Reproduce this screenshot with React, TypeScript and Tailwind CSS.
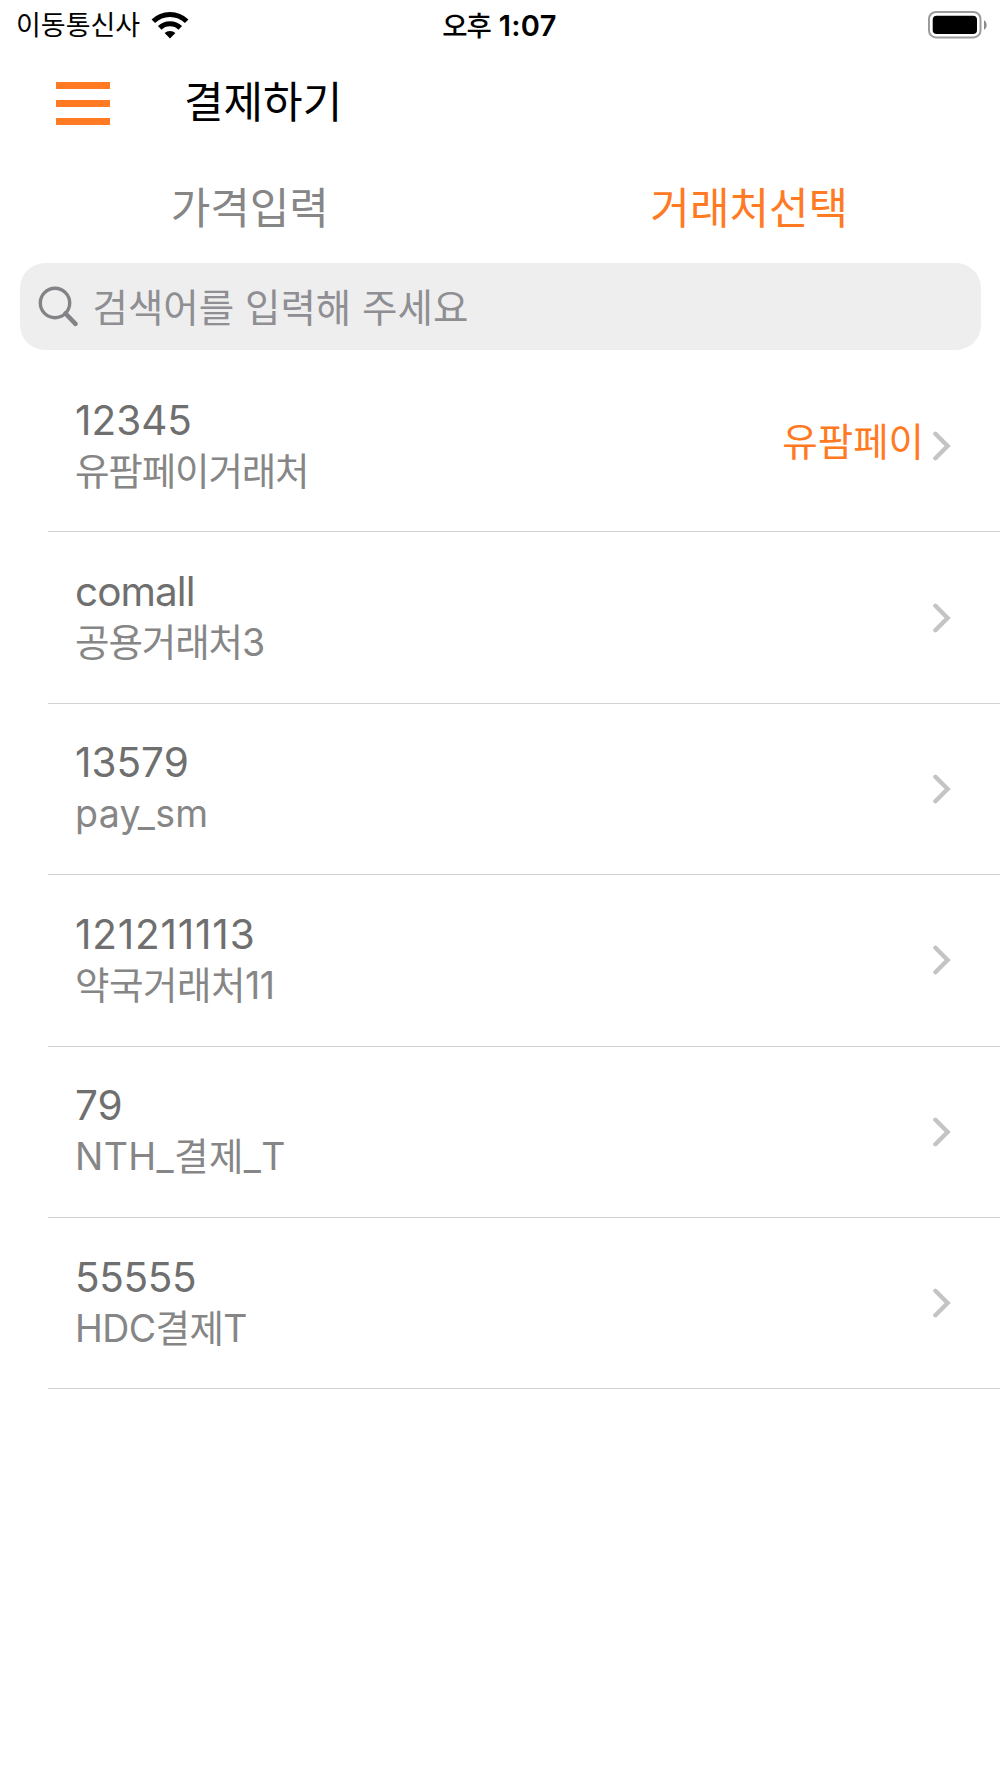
const merchants = [
  { code: "12345", name: "유팜페이거래처", tag: "유팜페이", codeStyle: "tracking-normal", nameStyle: "tracking-[-1.15px]" },
  { code: "comall", name: "공용거래처3", codeStyle: "tracking-[-0.95px]", nameStyle: "tracking-[-1.1px]" },
  { code: "13579", name: "pay_sm", codeStyle: "tracking-normal", nameStyle: "tracking-[0.3px]" },
  { code: "121211113", name: "약국거래처11", codeStyle: "tracking-[0.8px]", nameStyle: "tracking-[-0.5px]" },
  { code: "79", name: "NTH_결제_T", codeStyle: "tracking-normal", nameStyle: "tracking-[0.4px]" },
  { code: "55555", name: "HDC결제T", codeStyle: "tracking-[-0.4px]", nameStyle: "tracking-[-0.6px]" },
];

function WifiIcon() {
  return (
    <svg className="ml-[11px] h-[28px] w-[38px]" viewBox="0 0 38 28" fill="none" stroke="#000">
      <path d="M2.3 10.3A23.8 23.8 0 0 1 35.7 10.3" strokeWidth="5" />
      <path d="M8.7 16.9A14.7 14.7 0 0 1 29.3 16.9" strokeWidth="5" />
      <path d="M19 27.5L13.6 22.1A7.7 7.7 0 0 1 24.4 22.1Z" fill="#000" stroke="none" />
    </svg>
  );
}

function BatteryIcon() {
  return (
    <svg className="h-[28px] w-[60px]" viewBox="0 0 60 28">
      <rect x="1" y="1" width="51.5" height="25.4" rx="7" fill="none" stroke="#9b9b9b" strokeWidth="2" />
      <rect x="4.7" y="4.7" width="44.3" height="18.3" rx="4" fill="#000" />
      <path d="M56 9.2C59.5 11 59.5 17 56 18.8Z" fill="#8a8a8a" />
    </svg>
  );
}

function StatusBar() {
  return (
    <div className="grid h-12 grid-cols-3 items-center text-black">
      <div className="flex items-center pl-[16px]">
        <span className="pt-[2px] text-[27px] leading-[48px]">이동통신사</span>
        <WifiIcon />
      </div>
      <div className="flex items-center justify-center gap-[8px] pt-[2px] pr-[1px] leading-[48px]">
        <span className="text-[27.5px] font-medium tracking-[-0.04em]">오후</span>
        <span className="text-[29px] font-semibold tracking-[0.01em]">1:07</span>
      </div>
      <div className="flex justify-end pr-[12px]">
        <BatteryIcon />
      </div>
    </div>
  );
}

function Header() {
  return (
    <header className="flex h-[108px] items-center pl-[56px]">
      <button className="mt-[2px] flex w-[54px] flex-col gap-[11px]" aria-label="menu">
        <span className="h-[7px] w-full bg-[#ff7a22]" />
        <span className="h-[7px] w-full bg-[#ff7a22]" />
        <span className="h-[7px] w-full bg-[#ff7a22]" />
      </button>
      <h1 className="ml-[74px] text-[43px] leading-[64px] text-black">결제하기</h1>
    </header>
  );
}

function SearchIcon() {
  return (
    <svg className="mt-px h-[42px] w-[42px]" viewBox="0 0 42 42" fill="none" stroke="#838387">
      <circle cx="17" cy="17" r="14.7" strokeWidth="3.4" />
      <path d="M27.5 27.5L37.5 37.8" strokeWidth="4.6" strokeLinecap="round" />
    </svg>
  );
}

function Chevron() {
  return (
    <svg className="h-[30px] w-[18px]" viewBox="0 0 18 30" fill="none" stroke="#c4c4c6" strokeWidth="4.4" strokeLinecap="round" strokeLinejoin="miter">
      <path d="M2.4 2.8L14.6 15L2.4 27.2" />
    </svg>
  );
}

export default function App() {
  return (
    <div className="min-h-[1778px] w-[1000px] overflow-hidden bg-white font-[Inter,'Noto_Sans_CJK_KR',sans-serif]">
      <StatusBar />
      <Header />
      <nav className="grid h-[107px] grid-cols-2 pr-px text-center text-[43px] leading-[104px]">
        <span className="text-[#868686]">가격입력</span>
        <span className="text-[#ff7a22]">거래처선택</span>
      </nav>
      <div className="mx-[19.5px] flex h-[87px] items-center rounded-[25px] bg-[#eeeeee] pl-[18px]">
        <SearchIcon />
        <span className="ml-[13px] pt-[4px] text-[38.5px] leading-[83px] text-[#8e8e93]">검색어를 입력해 주세요</span>
      </div>
      <ul className="mt-[11px]">
        {merchants.map((m) => (
          <li key={m.code} className="ml-[48px] flex h-[171.4px] items-center border-b border-[#d2d2d4] pr-[49px] pl-[27px]">
            <div className="flex-1">
              <p className={`text-[40.5px] leading-[50px] text-[#6f6f6f] ${m.codeStyle}`}>{m.code}</p>
              <p className={`pt-px text-[37.5px] leading-[50px] text-[#868686] ${m.nameStyle}`}>{m.name}</p>
            </div>
            {m.tag && <span className="mr-[9px] pb-[6px] text-[38.5px] text-[#ff7a22]">{m.tag}</span>}
            <Chevron />
          </li>
        ))}
      </ul>
    </div>
  );
}
